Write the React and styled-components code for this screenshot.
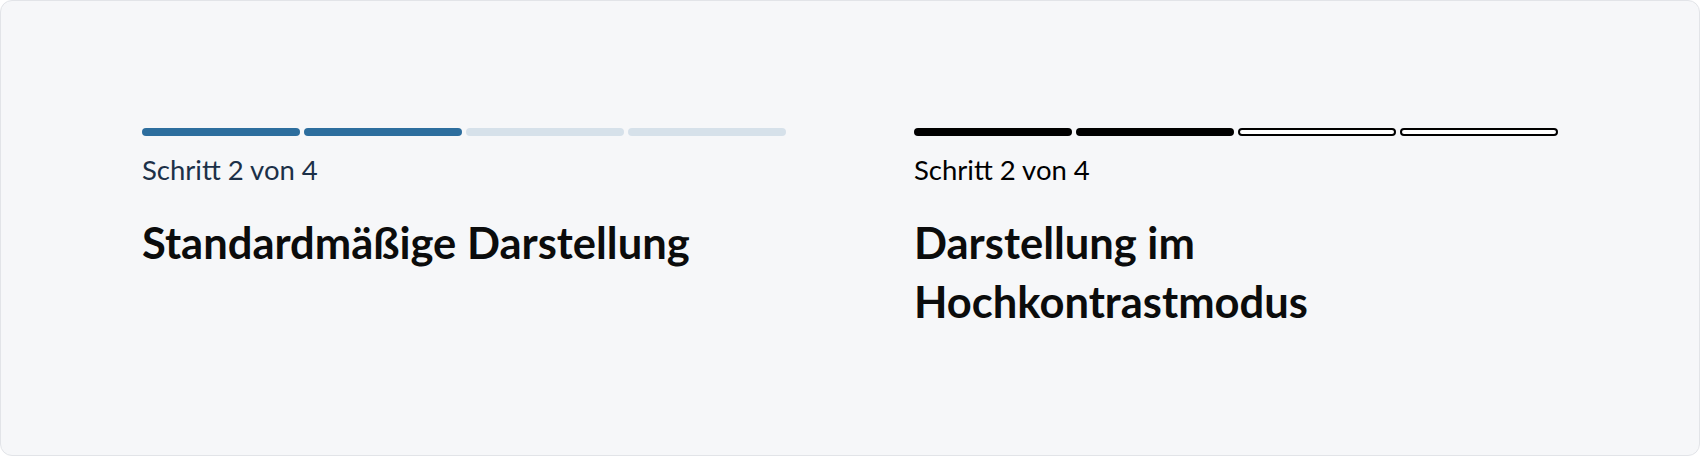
import React from "react";
import styled, { createGlobalStyle } from "styled-components";

const GlobalStyle = createGlobalStyle`
    html, body {
        margin: 0;
        padding: 0;
        background: #ffffff;
    }
`;

const StyledFrame = styled.div`
    box-sizing: border-box;
    width: 1700px;
    height: 456px;
    padding: 127px 141px 0 141px;
    background: #f6f7f9;
    border: 1px solid #e2e4e8;
    border-radius: 12px;
    display: grid;
    grid-template-columns: 1fr 1fr;
    column-gap: 128px;
    align-items: start;
    font-family: 'Lato', 'Liberation Sans', sans-serif;
`;

const StyledColumn = styled.div`
    display: flex;
    flex-direction: column;
`;

const StyledTrack = styled.div`
    display: grid;
    grid-template-columns: repeat(${(props) => props.total}, 1fr);
    gap: 4px;
`;

const StyledSegment = styled.div`
    box-sizing: border-box;
    height: 8px;
    border-radius: 4px;
    background: ${(props) => (props.done ? props.theme.done : props.theme.todo)};
    border: ${(props) => (props.done ? "none" : props.theme.todoBorder)};
`;

const StyledStep = styled.p`
    margin: 16px 0 0 0;
    font-size: 27.5px;
    line-height: 36px;
    color: ${(props) => props.color};
`;

const StyledTitle = styled.h2`
    margin: 25px 0 0 0;
    font-size: 43.5px;
    line-height: 59px;
    font-weight: 700;
    color: #0b0c0c;
`;

const defaultLook = {
    done: "#2d6e9e",
    todo: "#d6e1ea",
    todoBorder: "none",
    text: "#1c3048",
};

const contrastLook = {
    done: "#000000",
    todo: "#ffffff",
    todoBorder: "2px solid #000000",
    text: "#000000",
};

function Stepper({ look, current, total, title }) {
    const steps = Array.from({ length: total }, (_, i) => i < current);

    return (
        <StyledColumn>
            <StyledTrack total={total}>
                {steps.map((done, i) => (
                    <StyledSegment key={i} done={done} theme={look} />
                ))}
            </StyledTrack>
            <StyledStep color={look.text}>{`Schritt ${current} von ${total}`}</StyledStep>
            <StyledTitle>{title}</StyledTitle>
        </StyledColumn>
    );
}

export default function App() {
    return (
        <>
            <GlobalStyle />
            <StyledFrame>
                <Stepper look={defaultLook} current={2} total={4} title="Standardmäßige Darstellung" />
                <Stepper look={contrastLook} current={2} total={4} title="Darstellung im Hochkontrastmodus" />
            </StyledFrame>
        </>
    );
}
